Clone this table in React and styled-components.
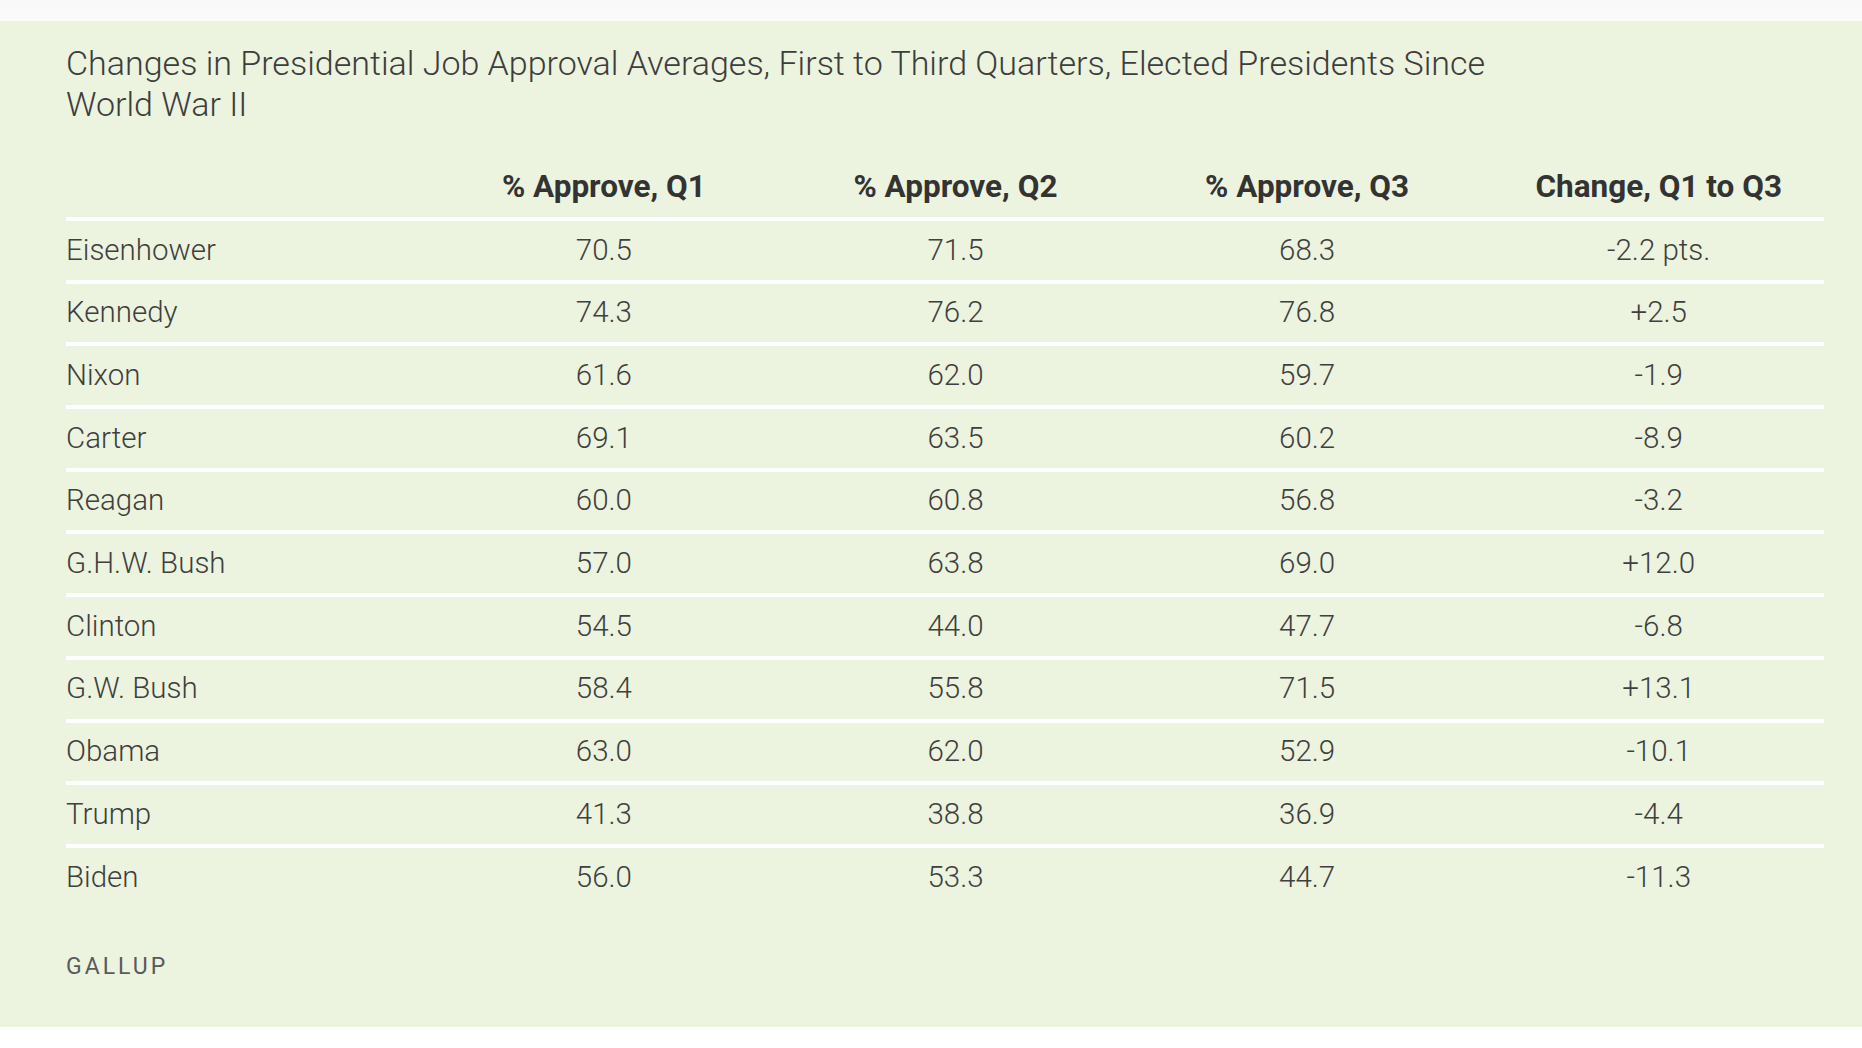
import React from "react";
import styled, { createGlobalStyle } from "styled-components";

const Global = createGlobalStyle`
  html, body { margin: 0; padding: 0; background: #ffffff; }
  body { font-family: Roboto, "Liberation Sans", Arial, sans-serif; }
`;

const Page = styled.div`
  width: 1862px;
  height: 1048px;
  display: flex;
  flex-direction: column;
  background: #ffffff;
`;

const TopStrip = styled.div`
  height: 21px;
  flex: none;
  background: linear-gradient(180deg, #f8f8f8 0%, #fbfbfb 100%);
`;

const Panel = styled.section`
  flex: none;
  height: 1006px;
  box-sizing: border-box;
  background: #ecf3de;
  padding: 22px 38px 0 66px;
  display: flex;
  flex-direction: column;
`;

const Title = styled.h2`
  margin: 0;
  max-width: 1470px;
  font-family: Roboto, "Liberation Sans", sans-serif;
  font-weight: 300;
  font-size: 34px;
  line-height: 41px;
  color: #3d3d3d;
`;

const Table = styled.div`
  margin-top: 25px;
  display: flex;
  flex-direction: column;
`;

const Row = styled.div`
  display: grid;
  grid-template-columns: repeat(5, 1fr);
  height: ${(p) => (p.$head ? "56px" : "58.7px")};
  border-bottom: ${(p) => (p.$last ? "0" : "4px solid #ffffff")};
  align-items: ${(p) => (p.$head ? "end" : "center")};
  padding-bottom: ${(p) => (p.$head ? "11px" : "0")};
  box-sizing: content-box;
`;

const Cell = styled.div`
  font-family: Roboto, "Liberation Sans", sans-serif;
  font-size: ${(p) => (p.$head ? "31.5px" : "29.5px")};
  font-weight: ${(p) => (p.$head ? 700 : 300)};
  color: ${(p) => (p.$head ? "#333333" : "#3f3f3f")};
  text-align: ${(p) => (p.$first ? "left" : "center")};
  padding-left: ${(p) => (p.$first ? "0" : "21px")};
  white-space: nowrap;
  line-height: 1.2;
`;

const Source = styled.div`
  margin-top: 46px;
  font-family: Roboto, "Liberation Sans", sans-serif;
  font-size: 23px;
  font-weight: 400;
  letter-spacing: 3px;
  color: #5a5a5a;
`;

const headers = ["", "% Approve, Q1", "% Approve, Q2", "% Approve, Q3", "Change, Q1 to Q3"];

const rows = [
  ["Eisenhower", "70.5", "71.5", "68.3", "-2.2 pts."],
  ["Kennedy", "74.3", "76.2", "76.8", "+2.5"],
  ["Nixon", "61.6", "62.0", "59.7", "-1.9"],
  ["Carter", "69.1", "63.5", "60.2", "-8.9"],
  ["Reagan", "60.0", "60.8", "56.8", "-3.2"],
  ["G.H.W. Bush", "57.0", "63.8", "69.0", "+12.0"],
  ["Clinton", "54.5", "44.0", "47.7", "-6.8"],
  ["G.W. Bush", "58.4", "55.8", "71.5", "+13.1"],
  ["Obama", "63.0", "62.0", "52.9", "-10.1"],
  ["Trump", "41.3", "38.8", "36.9", "-4.4"],
  ["Biden", "56.0", "53.3", "44.7", "-11.3"],
];

export default function App() {
  return (
    <>
      <Global />
      <Page>
        <TopStrip />
        <Panel>
          <Title>
            Changes in Presidential Job Approval Averages, First to Third Quarters, Elected Presidents Since World War II
          </Title>
          <Table>
            <Row $head>
              {headers.map((h, i) => (
                <Cell key={i} $head $first={i === 0}>
                  {h}
                </Cell>
              ))}
            </Row>
            {rows.map((r, ri) => (
              <Row key={r[0]} $last={ri === rows.length - 1}>
                {r.map((c, i) => (
                  <Cell key={i} $first={i === 0}>
                    {c}
                  </Cell>
                ))}
              </Row>
            ))}
          </Table>
          <Source>GALLUP</Source>
        </Panel>
      </Page>
    </>
  );
}
